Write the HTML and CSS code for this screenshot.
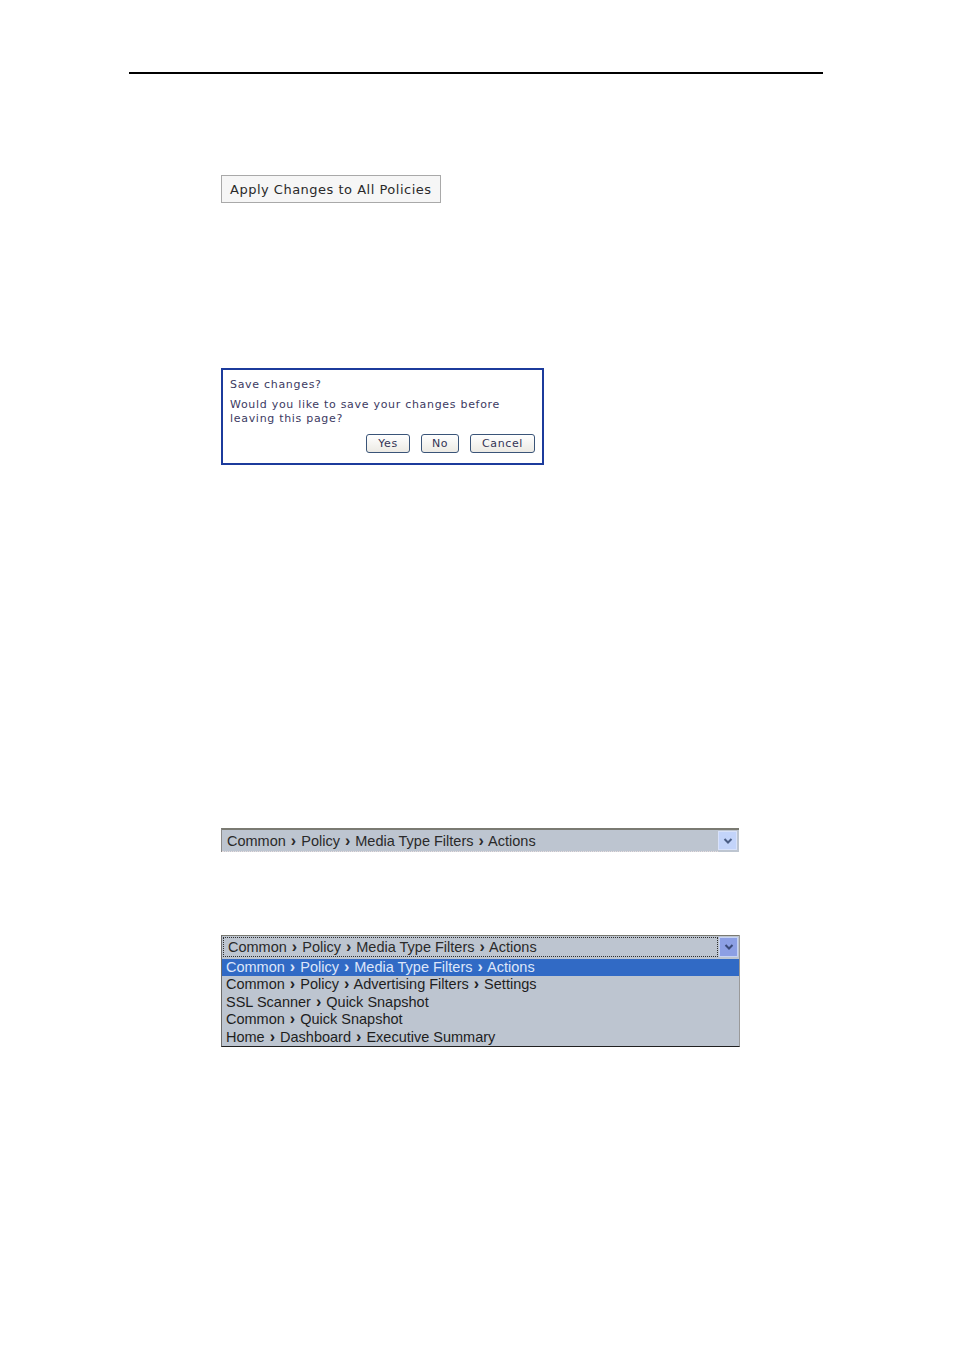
FILE: index.html
```html
<!DOCTYPE html>
<html>
<head>
<meta charset="utf-8">
<link rel="stylesheet" href="styles.css">
</head>
<body>
<div class="page">
  <div class="rule"></div>
  <div class="content">
    <button class="apply">Apply Changes to All Policies</button>

    <div class="dialog">
      <div class="d-title">Save changes?</div>
      <div class="d-text">Would you like to save your changes before leaving this page?</div>
      <div class="d-buttons">
        <button class="dbtn yes">Yes</button>
        <button class="dbtn no">No</button>
        <button class="dbtn cancel">Cancel</button>
      </div>
    </div>

    <div class="combo closed">
      <div class="combo-field"><span>Common <b>›</b> Policy <b>›</b> Media Type Filters <b>›</b> Actions</span></div>
      <div class="combo-arrow"><svg width="10" height="8" viewBox="0 0 10 8"><path d="M1.5 2 L5 5.5 L8.5 2" fill="none" stroke="#4a5d85" stroke-width="2"/></svg></div>
    </div>

    <div class="combo-open">
      <div class="combo focused">
        <div class="combo-field"><span class="focus">Common <b>›</b> Policy <b>›</b> Media Type Filters <b>›</b> Actions</span></div>
        <div class="combo-arrow dark"><svg width="10" height="8" viewBox="0 0 10 8"><path d="M1.5 2 L5 5.5 L8.5 2" fill="none" stroke="#3b4a78" stroke-width="2"/></svg></div>
      </div>
      <ul class="list">
        <li class="sel">Common <b>›</b> Policy <b>›</b> Media Type Filters <b>›</b> Actions</li>
        <li>Common <b>›</b> Policy <b>›</b> Advertising Filters <b>›</b> Settings</li>
        <li>SSL Scanner <b>›</b> Quick Snapshot</li>
        <li>Common <b>›</b> Quick Snapshot</li>
        <li>Home <b>›</b> Dashboard <b>›</b> Executive Summary</li>
      </ul>
    </div>
  </div>
</div>
</body>
</html>
```

FILE: styles.css
```css
html, body {
  margin: 0;
  padding: 0;
  background: #ffffff;
}

.page {
  width: 954px;
  height: 1350px;
  padding-top: 72px;
  box-sizing: border-box;
}

.rule {
  margin-left: 129px;
  width: 694px;
  height: 2px;
  background: #000000;
}

.content {
  padding-left: 221px;
  display: flex;
  flex-direction: column;
  align-items: flex-start;
}

.apply {
  margin-top: 101px;
  height: 28px;
  width: 220px;
  padding: 0 0 0 8px;
  text-align: left;
  background: #f6f6f6;
  border: 1px solid #a9a9a9;
  font-family: "DejaVu Sans", Verdana, sans-serif;
  font-size: 13px;
  letter-spacing: 0.5px;
  color: #2a2a2a;
  box-sizing: border-box;
}

.dialog {
  margin-top: 165px;
  width: 323px;
  height: 97px;
  box-sizing: border-box;
  border: 2px solid #1c3b9c;
  background: #ffffff;
  padding: 8px 7px 0 7px;
  font-family: "DejaVu Sans", Verdana, sans-serif;
  font-size: 11px;
  letter-spacing: 0.7px;
  color: #3c3a62;
}

.d-title {
  line-height: 14px;
}

.d-text {
  margin-top: 6px;
  line-height: 14px;
  width: 300px;
}

.d-buttons {
  display: flex;
  justify-content: flex-end;
  gap: 11px;
  margin-top: 8px;
  padding-right: 0;
}

.dbtn {
  height: 19px;
  padding: 0;
  border: 1px solid #3a5478;
  border-radius: 3px;
  background: linear-gradient(#ffffff, #eceae4);
  font-family: "DejaVu Sans", Verdana, sans-serif;
  font-size: 11px;
  letter-spacing: 0.6px;
  color: #333355;
  box-sizing: border-box;
}

.dbtn.yes { width: 44px; }
.dbtn.no { width: 38px; }
.dbtn.cancel { width: 65px; }

.combo {
  display: flex;
  align-items: stretch;
  box-sizing: border-box;
  font-family: "Liberation Sans", Arial, sans-serif;
  font-size: 14.5px;
  color: #2a2a2a;
}

.combo b, .list li b {
  font-weight: bold;
  font-size: 16px;
  line-height: 10px;
  margin: 0 1px;
}

.combo.closed {
  margin-top: 363px;
  width: 518px;
  height: 24px;
  background: #bdc5d0;
  border-top: 2px solid #7a7a72;
  border-left: 1px solid #8a8a8a;
}

.combo-field {
  flex: 1;
  display: flex;
  align-items: center;
  padding-left: 5px;
}

.combo-arrow {
  width: 17px;
  margin: 1px 2px 2px 0;
  background: #c3d4fa;
  border: 1px solid #d8e2fb;
  display: flex;
  align-items: center;
  justify-content: center;
}

.combo.closed .combo-field {
  border-bottom: 1px dotted #e8dede;
}

.combo-open {
  margin-top: 83px;
  width: 519px;
  box-sizing: border-box;
  background: #bdc5d0;
  border-bottom: 1px solid #202020;
  border-left: 1px solid #6c6c6c;
  border-right: 1px solid #9a9a9a;
}

.combo.focused {
  height: 23px;
  border-top: 1px solid #7a7a72;
  padding: 1px;
  background: #bdc5d0;
}

.combo.focused .combo-field {
  padding-left: 1px;
}

.focus {
  display: block;
  width: 100%;
  outline: 1px dotted #303030;
  padding-left: 4px;
  line-height: 18px;
}

.combo-arrow.dark {
  margin: 0 0 0 2px;
  background: #8c9fe4;
  border: 1px solid #c5d2f5;
}

.list {
  list-style: none;
  margin: 0;
  padding: 1px 0 0 0;
  font-family: "Liberation Sans", Arial, sans-serif;
  font-size: 14.5px;
  color: #1e1e1e;
}

.list li {
  height: 17.4px;
  line-height: 17px;
  padding-left: 4px;
}

.list li.sel {
  background: #316ac5;
  color: #dde6fa;
}
```
